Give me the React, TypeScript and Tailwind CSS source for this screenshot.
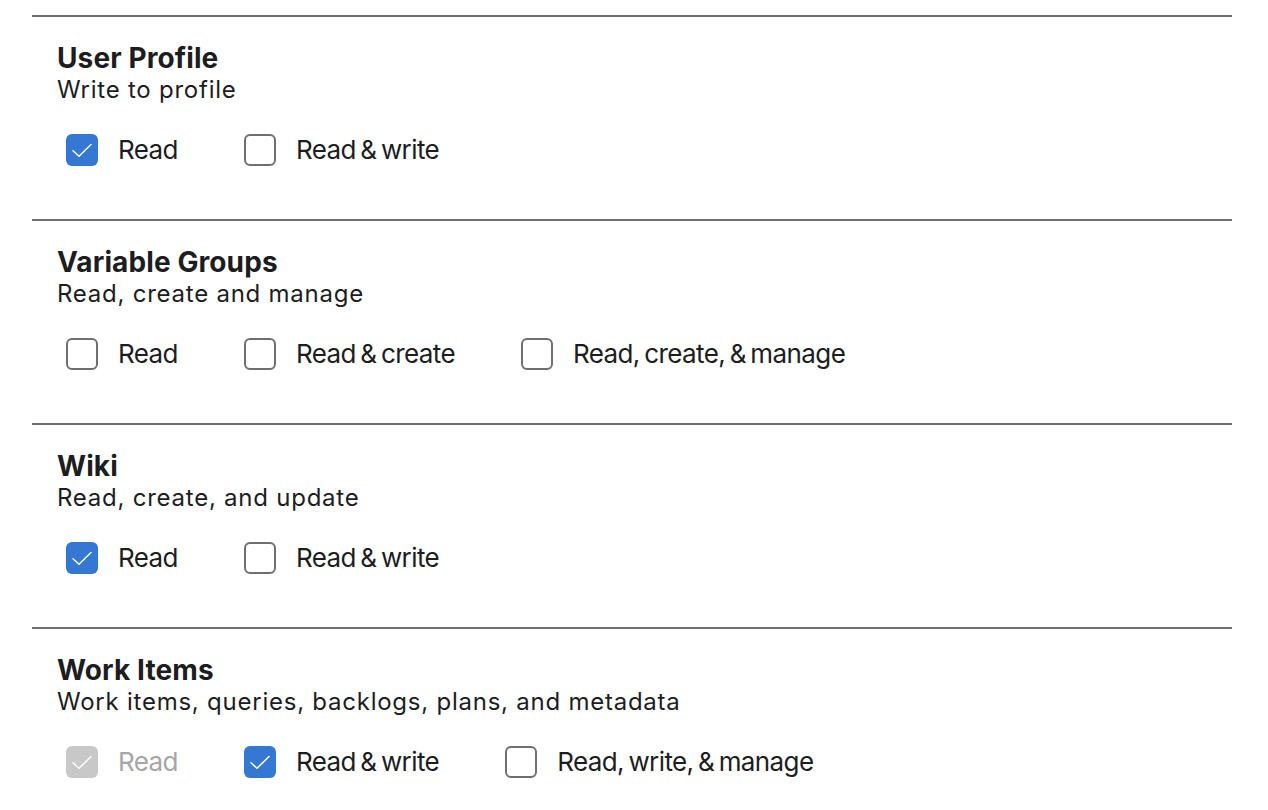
import React from "react";

type Opt = { label: string; checked?: boolean; disabled?: boolean };
type Sec = { title: string; desc: string; options: Opt[] };

const sections: Sec[] = [
  { title: "User Profile", desc: "Write to profile", options: [{ label: "Read", checked: true }, { label: "Read & write" }] },
  {
    title: "Variable Groups",
    desc: "Read, create and manage",
    options: [{ label: "Read" }, { label: "Read & create" }, { label: "Read, create, & manage" }],
  },
  { title: "Wiki", desc: "Read, create, and update", options: [{ label: "Read", checked: true }, { label: "Read & write" }] },
  {
    title: "Work Items",
    desc: "Work items, queries, backlogs, plans, and metadata",
    options: [{ label: "Read", checked: true, disabled: true }, { label: "Read & write", checked: true }, { label: "Read, write, & manage" }],
  },
];

function Box({ checked, disabled }: { checked?: boolean; disabled?: boolean }) {
  if (checked) {
    return (
      <span
        className={
          "flex h-[32px] w-[32px] shrink-0 items-center justify-center rounded-[6px] " +
          (disabled ? "bg-[#c8c8c8]" : "bg-[#3478d4]")
        }
      >
        <svg width="32" height="32" viewBox="0 0 32 32" fill="none">
          <path d="M7 16.8 L13 22.3 L25 10.5" stroke="white" strokeWidth="1.5" strokeLinecap="round" strokeLinejoin="round" />
        </svg>
      </span>
    );
  }
  return <span className="h-[32px] w-[32px] shrink-0 rounded-[6px] border-2 border-[#6f6f6f] bg-white" />;
}

export default function App() {
  return (
    <div className="min-h-[810px] w-full bg-white pt-[15px] pl-[32px] pr-[36px]" style={{ fontFamily: "Inter, 'Liberation Sans', sans-serif" }}>
      {sections.map((s) => (
        <section key={s.title} className="border-t-2 border-[#6e6e6e] pt-[25px] pb-[53px] pl-[25px]">
          <h2 className="text-[28px] font-bold leading-[32px] tracking-[0.1px] text-[#1d1d1f]">{s.title}</h2>
          <p className="text-[24px] leading-[32px] tracking-[0.76px] text-[#1d1d1f]">{s.desc}</p>
          <div className="mt-[28px] flex items-center gap-[66px] pl-[9px]">
            {s.options.map((o) => (
              <label key={o.label} className="flex items-center gap-[20px]">
                <Box checked={o.checked} disabled={o.disabled} />
                <span
                  className={
                    "text-[26px] leading-[32px] tracking-[-0.6px] [word-spacing:-2.2px] " +
                    (o.disabled ? "text-[#a6a6a6]" : "text-[#1d1d1f]")
                  }
                >
                  {o.label}
                </span>
              </label>
            ))}
          </div>
        </section>
      ))}
    </div>
  );
}
